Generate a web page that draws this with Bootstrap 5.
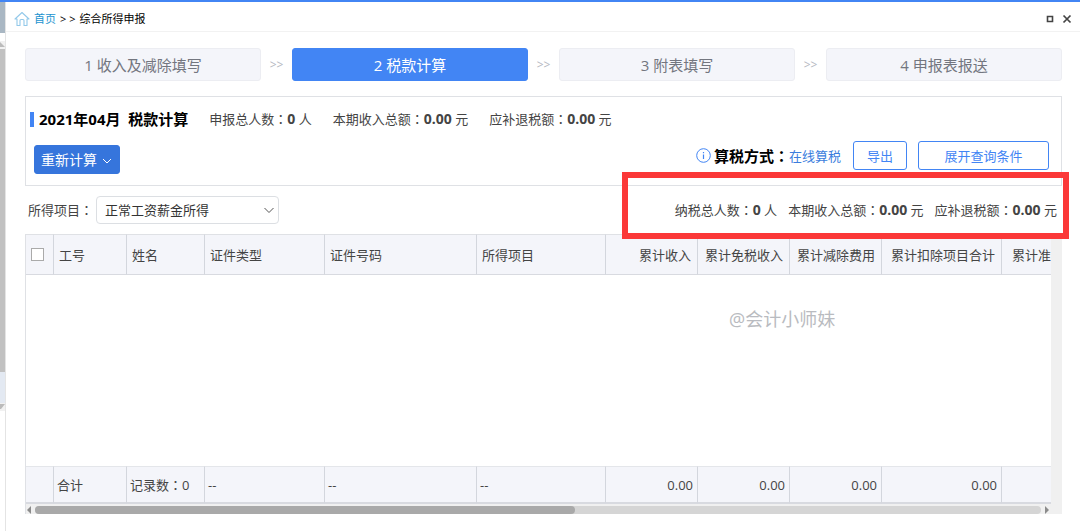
<!DOCTYPE html>
<html lang="zh-CN">
<head>
<meta charset="utf-8">
<meta name="viewport" content="width=device-width, initial-scale=1">
<title>综合所得申报</title>
<link href="https://cdn.jsdelivr.net/npm/bootstrap@5.3.0/dist/css/bootstrap.min.css" rel="stylesheet">
<style>
:root { --line: #dfe1e5; --brand: #4285f4; --pale: #f4f5fa; }
body { font: 13px/20px "Open Sans", "Noto Sans CJK SC", sans-serif; color: #444; background: #fff; border-top: 2px solid var(--brand); }
a { text-decoration: none; color: #3b7ddd; }
b { font-size: 14px; }
.colon { font-family: "Noto Sans CJK TC", sans-serif; }
.rail { width: 6px; border-right: 1px solid #e4e4e4; }
.rail-top { height: 31px; background: #a9b7c3; }
.rail-arrow { height: 8px; background: #f1f1f1; color: #bbb; }
.rail-arrow svg { display: block; }
.rail-thumb { flex: 0 0 61%; background: #c1c1c1; }
.rail-end { flex: 0 0 6%; background: #e3e9f2; }
.titlebar { height: 30px; padding: 4px 8px 0; border-bottom: 1px solid #f2f2f2; font-size: 11px; color: #000; }
.titlebar a { color: #1a93cf; }
.tool-btn { border: 0; background: none; padding: 0; line-height: 0; color: #444; }
.content { padding: 16px 18px 17px 19px; }
.step { flex: 1 1 0; height: 33px; border: 1px solid #ecedf2; border-radius: 3px; background: var(--pale); color: #73767f; font-size: 15px; padding: 0; }
.step.current { background: var(--brand); border-color: var(--brand); color: #fff; }
.step-gap { width: 31px; text-align: center; color: #b5b8bf; font-size: 12px; }
.panel { margin-top: 15px; height: 90px; border: 1px solid var(--line); padding: 12px 12px 0 4px; }
.panel h1 { font-size: 15px; line-height: 15px; color: #000; border-left: 4px solid var(--brand); padding-left: 5px; white-space: pre; }
.summary { gap: 21px; }
.btn { font-size: 13px; line-height: 20px; --bs-btn-border-radius: 3px; --bs-btn-padding-y: 3px; height: 29px; }
.btn-main { --bs-btn-color: #fff; --bs-btn-bg: #3675dc; --bs-btn-border-color: #3675dc; font-size: 14px; padding: 3px 6px; }
.btn-line { --bs-btn-color: #4285f4; --bs-btn-border-color: #4285f4; --bs-btn-bg: #fff; --bs-btn-padding-x: 0; }
.method { font-size: 15px; color: #000; margin-left: 3px; }
.export { width: 54px; margin-left: 12px; }
.expand { width: 131px; margin-left: 11px; }
.filters { height: 48px; padding: 0 5px 0 3px; }
.form-select { width: 183px; height: 28px; margin-left: 3px; font-size: 13px; line-height: 20px; padding: 3px 24px 3px 8px; color: #333; border-color: #dcdfe3; border-radius: 4px; background-position: right 4px center; background-size: 10px 10px;
 background-image: url("data:image/svg+xml,%3csvg xmlns='http://www.w3.org/2000/svg' viewBox='0 0 10 10'%3e%3cpath fill='none' stroke='%23555' d='M.5 3 5 7.500 9.500 3'/%3e%3c/svg%3e"); }
.totals { gap: 11px; }
.callout { top: -14px; bottom: -5px; right: -7px; width: 447px; border: 6px solid #fb3838; pointer-events: none; z-index: 3; }
.sheet-wrap { background: #f0f0f0; border-left: 1px solid var(--line); }
.sheet-inner { margin-right: 11px; background: #fff; overflow: hidden; }
.sheet { table-layout: fixed; width: 100%; height: 100%; border-collapse: separate; border-spacing: 0; color: #444; }
.sheet th, .sheet tfoot td { background: var(--pale); font-weight: 400; padding: 0 6px 0 5px; white-space: nowrap; border-right: 1px solid #d3d6dd; overflow: hidden; }
.sheet th { height: 41px; border-top: 1px solid var(--line); border-bottom: 1px solid #d8dae0; }
.sheet tfoot td { height: 38px; padding: 0 4px 0 3px; border-top: 1px solid #e4e6ea; border-bottom: 2px solid #d8dae0; }
.sheet tr > :last-child { border-right: 0; }
.sheet th:last-child { padding-left: 10px; }
.sheet .form-check-input { width: 13px; height: 13px; margin: 0; border: 1px solid #aaa; border-radius: 0; display: block; }
.watermark { color: #b9bbc0; font-size: 18px; padding-left: 703px; padding-top: 32px; line-height: 24px; vertical-align: top; }
.hbar { height: 10px; margin-right: 11px; padding: 1px 2px 0 1px; gap: 4px; color: #8b8b8b; }
.hbar-track { height: 8px; background: #d5d5d5; border-radius: 4px; }
.hbar-thumb { height: 8px; background: #a9a9a9; border-radius: 4px; }
</style>
</head>
<body class="d-flex vh-100 overflow-hidden">
<aside class="rail d-flex flex-column flex-shrink-0">
  <div class="rail-top flex-shrink-0"></div>
  <div class="rail-arrow mt-2 flex-shrink-0"><svg width="5" height="8"><path d="M0 1 5 6H0z" fill="currentColor"/></svg></div>
  <div class="rail-thumb"></div>
  <div class="rail-end"></div>
  <div class="rail-arrow flex-shrink-0"><svg width="5" height="8"><path d="M0 1H5L1 6H0z" fill="currentColor"/></svg></div>
</aside>
<main class="flex-grow-1 d-flex flex-column overflow-hidden">
  <header class="titlebar d-flex align-items-center flex-shrink-0">
    <svg width="16" height="16" viewBox="0 0 16 16" fill="none" stroke="#93c9ea" stroke-width="1.100" stroke-linejoin="round"><path d="M1 8 8 1.500 15 8h-2v6.500h-3V9.500q0-1-1-1H7q-1 0-1 1v5H3V8z"/></svg>
    <a href="#" class="ms-1">首页</a><span class="mx-1">&gt; &gt;</span><span>综合所得申报</span>
    <div class="ms-auto d-flex align-items-center gap-2">
      <button class="tool-btn" type="button" aria-label="最大化"><svg width="8" height="8"><path d="M1.500 1.500h5v5h-5z" fill="none" stroke="currentColor" stroke-width="1.600"/></svg></button>
      <button class="tool-btn" type="button" aria-label="关闭"><svg width="10" height="10"><path d="m1.500 1.500 7 7m0-7-7 7" stroke="currentColor" stroke-width="1.700"/></svg></button>
    </div>
  </header>
  <div class="content flex-grow-1 d-flex flex-column">
    <nav class="d-flex align-items-center flex-shrink-0" aria-label="步骤">
      <button type="button" class="step">1 收入及减除填写</button><span class="step-gap">&gt;&gt;</span>
      <button type="button" class="step current">2 税款计算</button><span class="step-gap">&gt;&gt;</span>
      <button type="button" class="step">3 附表填写</button><span class="step-gap">&gt;&gt;</span>
      <button type="button" class="step">4 申报表报送</button>
    </nav>
    <section class="panel flex-shrink-0">
      <div class="summary d-flex align-items-center">
        <h1 class="fw-bold mb-0">2021年04月  税款计算</h1>
        <span>申报总人数<span class="colon" lang="zh-TW">：</span><b>0</b> 人</span>
        <span>本期收入总额<span class="colon" lang="zh-TW">：</span><b>0.00</b> 元</span>
        <span>应补退税额<span class="colon" lang="zh-TW">：</span><b>0.00</b> 元</span>
      </div>
      <div class="d-flex mt-2 pt-1 ps-1">
        <button type="button" class="btn btn-main mt-1">重新计算<svg class="ms-1" width="12" height="10" viewBox="0 0 12 10" fill="none" stroke="currentColor"><path d="m2 3 4 4 4-4"/></svg></button>
        <div class="ms-auto d-flex align-items-center align-self-start">
          <svg width="15" height="15" viewBox="0 0 15 15" fill="none" stroke="#4285f4"><circle cx="7.500" cy="7.500" r="6.800"/><path d="M7.500 6.500V11M7.500 4v1.300" stroke-width="1.200"/></svg>
          <strong class="method">算税方式<span class="colon" lang="zh-TW">：</span></strong><a href="#">在线算税</a>
          <button type="button" class="btn btn-line export">导出</button>
          <button type="button" class="btn btn-line expand">展开查询条件</button>
        </div>
      </div>
    </section>
    <section class="filters d-flex align-items-center position-relative flex-shrink-0">
      <label for="item">所得项目<span class="colon" lang="zh-TW">：</span></label>
      <select id="item" class="form-select"><option>正常工资薪金所得</option></select>
      <div class="totals ms-auto d-flex">
        <span>纳税总人数<span class="colon" lang="zh-TW">：</span><b>0</b> 人</span>
        <span>本期收入总额<span class="colon" lang="zh-TW">：</span><b>0.00</b> 元</span>
        <span>应补退税额<span class="colon" lang="zh-TW">：</span><b>0.00</b> 元</span>
      </div>
      <div class="callout position-absolute"></div>
    </section>
    <div class="sheet-wrap flex-grow-1 d-flex flex-column">
      <div class="sheet-inner flex-grow-1">
        <table class="sheet">
          <colgroup><col style="width:28px"><col style="width:73px"><col style="width:78px"><col style="width:120px"><col style="width:152px"><col style="width:129px"><col style="width:92px"><col style="width:92px"><col style="width:92px"><col style="width:120px"><col></colgroup>
          <thead><tr>
            <th><input class="form-check-input" type="checkbox" aria-label="全选"></th>
            <th>工号</th><th>姓名</th><th>证件类型</th><th>证件号码</th><th>所得项目</th>
            <th class="text-end">累计收入</th><th class="text-end">累计免税收入</th><th class="text-end">累计减除费用</th><th class="text-end">累计扣除项目合计</th><th>累计准</th>
          </tr></thead>
          <tbody><tr><td colspan="11" class="watermark">@会计小师妹</td></tr></tbody>
          <tfoot><tr>
            <td></td><td>合计</td><td>记录数<span class="colon" lang="zh-TW">：</span>0</td><td>--</td><td>--</td><td>--</td>
            <td class="text-end">0.00</td><td class="text-end">0.00</td><td class="text-end">0.00</td><td class="text-end">0.00</td><td></td>
          </tr></tfoot>
        </table>
      </div>
      <div class="hbar d-flex align-items-center flex-shrink-0">
        <svg width="4" height="8"><path d="M4 0v8L0 4z" fill="currentColor"/></svg>
        <div class="hbar-track flex-grow-1"><div class="hbar-thumb" style="width:53.7%"></div></div>
        <svg width="4" height="8"><path d="M0 0v8l4-4z" fill="currentColor"/></svg>
      </div>
    </div>
  </div>
</main>
<script src="https://cdn.jsdelivr.net/npm/bootstrap@5.3.0/dist/js/bootstrap.bundle.min.js"></script>
</body>
</html>
